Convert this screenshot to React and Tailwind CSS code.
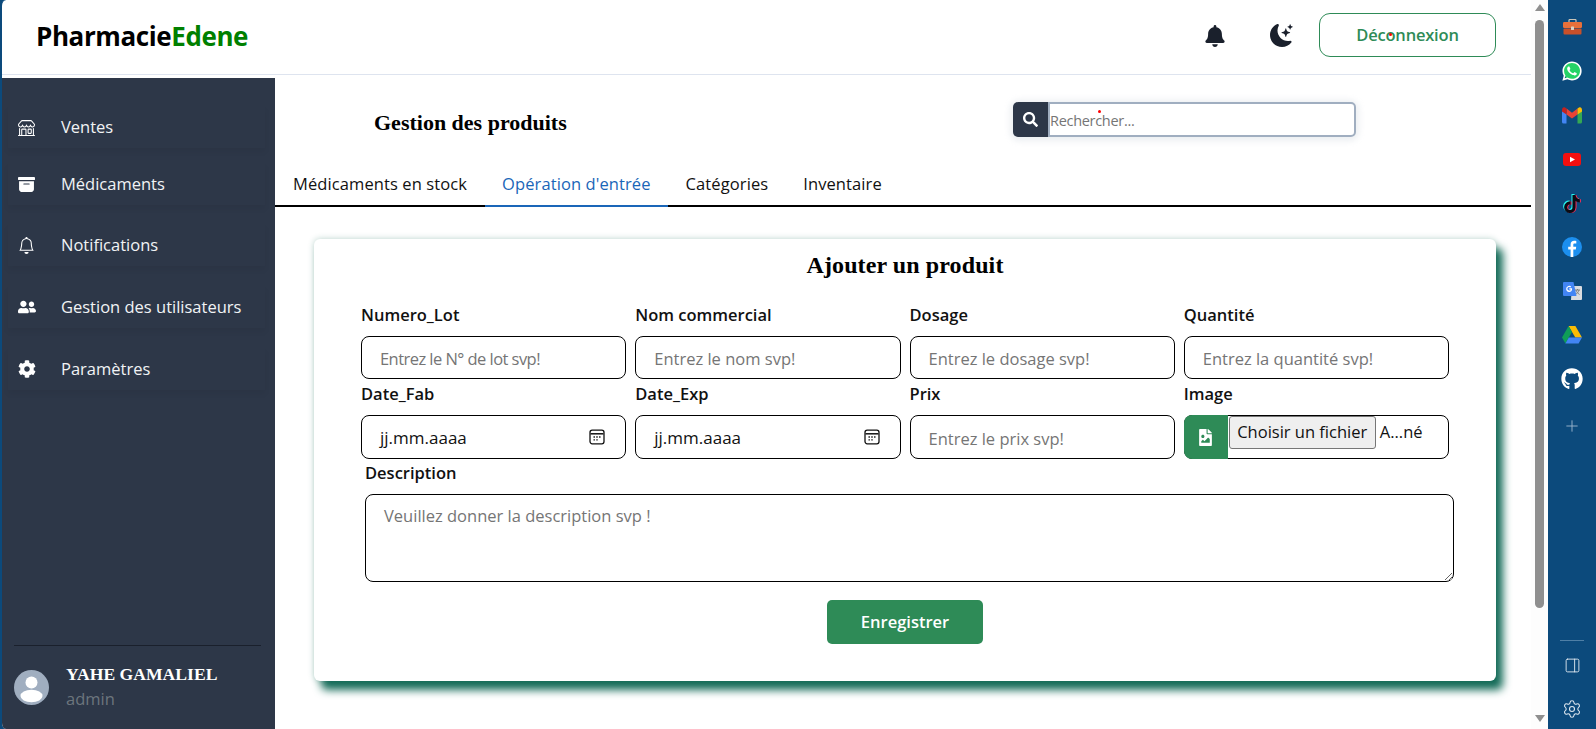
import React from "react";
import { FaBell, FaSearch, FaUserFriends, FaCog, FaWhatsapp, FaTiktok, FaGithub, FaFileImage } from "react-icons/fa";
import { BsMoonStarsFill, BsShop, BsArchiveFill, BsBell } from "react-icons/bs";
import { Plus, PanelRight, Settings } from "lucide-react";

const navItems = [
  { label: "Ventes", Icon: BsShop, mt: "mt-[28px]", size: 17 },
  { label: "Médicaments", Icon: BsArchiveFill, mt: "mt-[15px]", size: 17 },
  { label: "Notifications", Icon: BsBell, mt: "mt-[19px]", size: 17 },
  { label: "Gestion des utilisateurs", Icon: FaUserFriends, mt: "mt-[20px]", size: 18 },
  { label: "Paramètres", Icon: FaCog, mt: "mt-[20px]", size: 18 },
];

function Label({ children, className = "" }) {
  return <label className={"block h-[24px] leading-[24px] text-[16.5px] font-semibold text-[#111] " + className}>{children}</label>;
}

function TextField({ label, placeholder, tight = "" }) {
  return (
    <div>
      <Label>{label}</Label>
      <input
        type="text"
        placeholder={placeholder}
        className={"mt-[9px] block w-full h-[43px] rounded-[8px] border border-black bg-white pl-[18px] pt-[2px] text-[16.5px] outline-none placeholder:text-[#757575] " + tight}
      />
    </div>
  );
}

function CalendarGlyph() {
  return (
    <svg width="16" height="16" viewBox="0 0 16 16" fill="none">
      <rect x="1" y="1.2" width="14" height="13.6" rx="2.2" stroke="#111" strokeWidth="1.3" />
      <path d="M1.5 4.8h13" stroke="#111" strokeWidth="1.5" />
      <path d="M4.5 8h1.4M7.3 8h1.4M10.1 8h1.4M4.5 10.8h1.4M7.3 10.8h1.4" stroke="#111" strokeWidth="1.3" />
    </svg>
  );
}

function DateField({ label }) {
  return (
    <div>
      <Label>{label}</Label>
      <div className="mt-[9px] flex items-center justify-between h-[44px] rounded-[8px] border border-black bg-white pl-[18px] pr-[20px] text-[17px] text-[#111]">
        <span className="pt-[1px]">jj.mm.aaaa</span>
        <CalendarGlyph />
      </div>
    </div>
  );
}

function Gmail() {
  return (
    <svg width="22" height="18" viewBox="0 0 22 18">
      <path d="M1 4v12a1.5 1.5 0 0 0 1.5 1.5H5.5V7.5z" fill="#4285F4" />
      <path d="M21 4v12a1.5 1.5 0 0 1-1.5 1.5H16.5V7.5z" fill="#34A853" />
      <path d="M5.5 8.5 11 12.6l5.5-4.1V2.6L11 6.7 5.5 2.6z" fill="#EA4335" />
      <path d="M1 4v1.5l4.5 3V2.6L4 1.5C2.6.5 1 1.7 1 4z" fill="#C5221F" />
      <path d="M21 4v1.5l-4.5 3V2.6L18 1.5C19.4.5 21 1.7 21 4z" fill="#FBBC04" />
    </svg>
  );
}

function Youtube() {
  return (
    <svg width="18" height="13" viewBox="0 0 18 13">
      <rect width="18" height="13" rx="3" fill="#F40F0F" />
      <path d="M7 3.8 12 6.5 7 9.2z" fill="#fff" />
    </svg>
  );
}

function Tiktok() {
  return (
    <span className="relative block w-[18px] h-[20px]">
      <FaTiktok size={18} color="#25F4EE" className="absolute left-[-1px] top-[1px]" />
      <FaTiktok size={18} color="#FE2C55" className="absolute left-[1px] top-[2px]" />
      <FaTiktok size={18} color="#0b0b14" className="absolute left-0 top-[1.5px]" />
    </span>
  );
}

function Facebook() {
  return (
    <svg width="20" height="20" viewBox="0 0 20 20">
      <circle cx="10" cy="10" r="10" fill="#1C8FEF" />
      <path d="M11.3 20v-7.4h2.5l.4-2.9h-2.9V7.9c0-.9.3-1.4 1.5-1.4h1.5V3.9c-.4 0-1.2-.1-2.1-.1-2.2 0-3.6 1.3-3.6 3.7v2.2H6.2v2.9h2.4V20z" fill="#fff" />
    </svg>
  );
}

function Translate() {
  return (
    <svg width="19" height="19" viewBox="0 0 19 19">
      <path d="M9 4h9a1 1 0 0 1 1 1v12a1 1 0 0 1-1 1H8z" fill="#DADCE0" />
      <path d="M12 8h5M14.5 7v1M13 8c.5 2 2 3.6 3.5 4.5M16 8c-.5 2-2 3.6-3.5 4.5" stroke="#777" strokeWidth=".9" fill="none" />
      <path d="M1 0h9.5l3 14H1a1 1 0 0 1-1-1V1a1 1 0 0 1 1-1z" fill="#4285F4" />
      <path d="M9 6.2H6.3v1.2h1.5c-.2.8-.8 1.2-1.6 1.2a1.8 1.8 0 1 1 1.1-3.2l.9-.9A3.1 3.1 0 1 0 6.2 10c1.7 0 2.9-1.2 2.9-3z" fill="#fff" />
    </svg>
  );
}

function Drive() {
  return (
    <svg width="20" height="18" viewBox="0 0 20 18">
      <path d="M6.6 0h6.8l6.6 11.5h-6.7z" fill="#FBBC04" />
      <path d="M6.6 0 0 11.5 3.4 17.5 10 6z" fill="#0F9D58" />
      <path d="M3.4 17.5h13.2l3.4-6H6.8z" fill="#4285F4" />
    </svg>
  );
}

function Briefcase() {
  return (
    <svg width="19" height="16" viewBox="0 0 19 16">
      <path d="M6 3V1.3C6 .8 6.4.5 7 .5h5c.6 0 1 .3 1 .8V3" fill="none" stroke="#C9C4B8" strokeWidth="1.2" />
      <rect x="0" y="3" width="19" height="6" rx="1.2" fill="#E8703A" />
      <rect x="0.5" y="9.5" width="18" height="6" rx="1" fill="#C8502A" />
      <rect x="8" y="7.5" width="3" height="3.5" rx=".6" fill="#D8D3C6" />
    </svg>
  );
}

function Whatsapp() {
  return (
    <span className="relative block w-[22px] h-[22px]">
      <span className="absolute left-[2px] top-[2px] w-[18px] h-[18px] rounded-full bg-[#25D366]" />
      <FaWhatsapp size={22} color="#fff" className="absolute left-0 top-0" />
    </span>
  );
}

function Avatar() {
  return (
    <svg width="35" height="35" viewBox="0 0 35 35">
      <circle cx="17.5" cy="17.5" r="17.5" fill="#A0AEC0" />
      <circle cx="17.5" cy="12.5" r="6" fill="#fff" />
      <ellipse cx="17.5" cy="26" rx="11" ry="6.2" fill="#fff" />
    </svg>
  );
}

const rail = [
  <Briefcase />,
  <Whatsapp />,
  <Gmail />,
  <Youtube />,
  <Tiktok />,
  <Facebook />,
  <Translate />,
  <Drive />,
  <FaGithub size={22} color="#fff" />,
];

export default function App() {
  return (
    <div className="flex w-[1596px] h-[729px] overflow-hidden bg-[#0c4a7c] font-['Open_Sans',sans-serif]">
      <div className="w-[1531px] h-full shrink-0 flex flex-col bg-white border-l-2 border-[#0c4a7c] rounded-tl-[6px] rounded-bl-[6px] overflow-hidden">
        <header className="h-[75px] shrink-0 flex items-center border-b border-[#dee4ef] pl-[34px] pb-[3px]">
          <div className="text-[26px] font-bold tracking-[-0.4px] text-black leading-none">
            Pharmacie<span className="text-[#008000]">Edene</span>
          </div>
          <div className="ml-auto flex items-center">
            <FaBell size={22} color="#1a202c" />
            <BsMoonStarsFill size={23} color="#1a202c" className="ml-[44px]" />
            <button className="relative ml-[26px] mr-[35px] mb-[1px] w-[177px] h-[44px] rounded-[11px] border border-[#2e8b57] text-[16.5px] font-semibold tracking-[-0.2px] text-[#2e8b57]">
              Déconnexion
              <span className="absolute left-[69px] top-[19px] w-[3px] h-[3px] rounded-full bg-[#f00]" />
            </button>
          </div>
        </header>
        <div className="flex flex-1 min-h-0 pt-[3px]">
          <aside className="w-[273px] shrink-0 flex flex-col bg-[#2d3748] text-[#f1f3f5]">
            {navItems.map(({ label, Icon, mt, size }) => (
              <div key={label} className={mt + " ml-[6px] mr-[10px] h-[42px] flex items-center shadow-[0_4px_6px_rgba(0,0,0,0.05)]"}>
                <span className="w-[53px] pl-[10px] flex items-center"><Icon size={size} color="#fff" /></span>
                <span className="text-[16.5px]">{label}</span>
              </div>
            ))}
            <div className="mt-auto ml-[12px] mr-[14px] border-t border-[#1a202c]" />
            <div className="flex items-center ml-[12px] mt-[15px] mb-[16px] h-[52px]">
              <Avatar />
              <div className="ml-[17px]">
                <div className="font-['Liberation_Serif',serif] font-bold text-[17.6px] leading-[24px] text-white">YAHE GAMALIEL</div>
                <div className="text-[16.5px] leading-[26px] text-[#6c757d]">admin</div>
              </div>
            </div>
          </aside>
          <main className="flex-1 min-w-0">
            <div className="flex items-start pt-[24px] h-[85px]">
              <h1 className="w-[738px] pl-[99px] pt-[5px] font-['Liberation_Serif',serif] font-bold text-[22px] leading-[32px] text-black">Gestion des produits</h1>
              <div className="relative flex w-[343px] h-[35px] rounded-[6px] shadow-[0_1px_6px_3px_rgba(160,174,192,0.2)]">
                <span className="w-[35px] flex items-center justify-center bg-[#2d3748] rounded-l-[5px]"><FaSearch size={15} color="#fff" /></span>
                <input type="text" placeholder="Rechercher..." className="flex-1 min-w-0 border-2 border-[#a0aec0] rounded-r-[5px] pt-[2px] text-[14.5px] tracking-[-0.3px] outline-none placeholder:text-[#757575]" />
                <span className="absolute left-[85px] top-[8px] w-[3px] h-[3px] rounded-full bg-[#f00]" />
              </div>
            </div>
            <nav className="flex h-[44px] border-b-2 border-black text-[16.5px] tracking-[0.1px] text-[#111]">
              <span className="px-[18px] leading-[42px]">Médicaments en stock</span>
              <span className="px-[17px] leading-[42px] text-[#1a66b8] border-b-2 border-[#1a66b8] h-[44px]">Opération d'entrée</span>
              <span className="px-[18px] leading-[42px]">Catégories</span>
              <span className="px-[17px] leading-[42px]">Inventaire</span>
            </nav>
            <section className="ml-[39px] mt-[32px] w-[1182px] h-[442px] bg-white rounded-[6px] px-[47px] pt-[11px] shadow-[7px_9px_8px_#146b58,0_0_6px_rgba(30,110,90,0.3)]">
              <h2 className="h-[30px] text-center font-['Liberation_Serif',serif] font-bold text-[24px] leading-[30px] tracking-[0.1px] text-black">Ajouter un produit</h2>
              <div className="mt-[23px] grid grid-cols-4 gap-x-[9px] gap-y-[3px]">
                <TextField label="Numero_Lot" placeholder="Entrez le N° de lot svp!" tight="tracking-[-0.55px]" />
                <TextField label="Nom commercial" placeholder="Entrez le nom svp!" />
                <TextField label="Dosage" placeholder="Entrez le dosage svp!" />
                <TextField label="Quantité" placeholder="Entrez la quantité svp!" />
                <DateField label="Date_Fab" />
                <DateField label="Date_Exp" />
                <div>
                  <Label>Prix</Label>
                  <input type="text" placeholder="Entrez le prix svp!" className="mt-[9px] block w-full h-[44px] rounded-[8px] border border-black bg-white pl-[18px] pt-[2px] text-[16.5px] outline-none placeholder:text-[#757575]" />
                </div>
                <div>
                  <Label>Image</Label>
                  <div className="mt-[9px] flex h-[44px] rounded-[8px] border border-black bg-white">
                    <span className="-ml-[1px] -my-[1px] w-[44px] shrink-0 flex items-center justify-center rounded-l-[8px] bg-[#2e8b57]"><FaFileImage size={17} color="#fff" /></span>
                    <span className="ml-[1px] h-[33px] w-[147px] shrink-0 flex items-center justify-center bg-[#efefef] border border-[#767676] rounded-[3px] text-[16.5px] text-[#111]">Choisir un fichier</span>
                    <span className="ml-[4px] mt-[4px] text-[16.5px] text-[#111]">A...né</span>
                  </div>
                </div>
              </div>
              <Label className="mt-[2px] ml-[4px]">Description</Label>
              <textarea placeholder="Veuillez donner la description svp !" className="mt-[9px] ml-[4px] block w-[1089px] h-[88px] rounded-[8px] border border-black px-[18px] py-[9px] text-[16.5px] outline-none placeholder:text-[#757575]" />
              <button className="block mx-auto mt-[18px] w-[156px] h-[44px] rounded-[5px] bg-[#2e8b57] text-white text-[16.5px] font-semibold">Enregistrer</button>
            </section>
          </main>
        </div>
      </div>
      <div className="w-[17px] shrink-0 h-full bg-[#fdfdfd] flex flex-col items-center">
        <span className="mt-[4px] w-0 h-0 border-x-[5px] border-x-transparent border-b-[7px] border-b-[#8f8f8f]" />
        <span className="mt-[9px] w-[9px] h-[588px] rounded-full bg-[#8f8f8f]" />
        <span className="mt-auto mb-[7px] w-0 h-0 border-x-[5px] border-x-transparent border-t-[7px] border-t-[#8f8f8f]" />
      </div>
      <div className="flex-1 flex flex-col items-center bg-[#0c4a7c] pt-[5px]">
        {rail.map((icon, i) => (
          <div key={i} className="h-[44px] flex items-center justify-center">{icon}</div>
        ))}
        <Plus size={18} color="#9fb8cf" strokeWidth={1.2} className="mt-[16px]" />
        <div className="mt-auto w-[24px] border-t border-[#4f7fa6]" />
        <PanelRight size={17} color="#dfe8f0" strokeWidth={1.3} className="mt-[16px]" />
        <Settings size={20} color="#dfe8f0" strokeWidth={1.3} className="mt-[25px] mb-[10px]" />
      </div>
    </div>
  );
}
